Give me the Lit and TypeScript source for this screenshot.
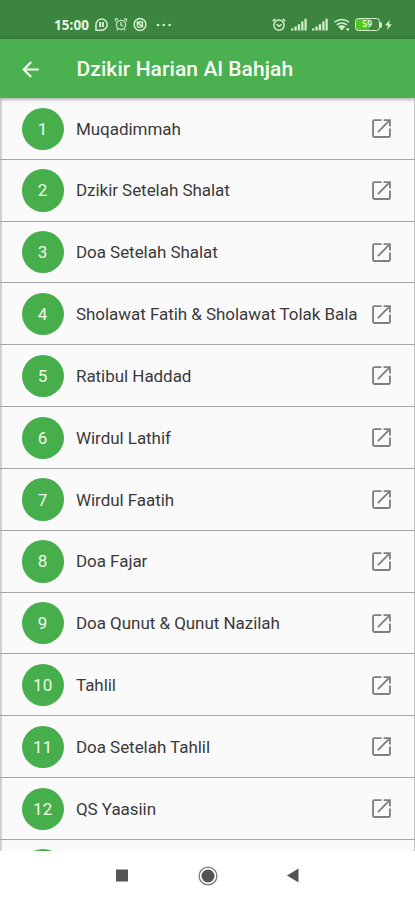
import { LitElement, html, css, svg } from "lit";
import { customElement } from "lit/decorators.js";

const TITLES = [
  "Muqadimmah",
  "Dzikir Setelah Shalat",
  "Doa Setelah Shalat",
  "Sholawat Fatih & Sholawat Tolak Bala",
  "Ratibul Haddad",
  "Wirdul Lathif",
  "Wirdul Faatih",
  "Doa Fajar",
  "Doa Qunut & Qunut Nazilah",
  "Tahlil",
  "Doa Setelah Tahlil",
  "QS Yaasiin",
];

const signal = svg`<path d="M0 12.4V10.4h2.3v2zM3.4 12.4V8.6h2.3v3.8zM6.8 12.4V6.2h2.3v6.2zM10.2 12.4V3.6h2.3v8.8zM13.5 12.4V.8h2.2v11.6z"/>`;

@customElement("status-bar")
class StatusBar extends LitElement {
  static styles = css`
    :host {
      display: flex;
      justify-content: space-between;
      align-items: center;
      box-sizing: border-box;
      height: 39px;
      padding: 10px 23.5px 0 54px;
      background: #3b853e;
      color: #d4efcf;
    }
    .group { display: flex; align-items: center; }
    .time {
      width: 40px;
      font: 700 13.5px/16px "Noto Sans", sans-serif;
      letter-spacing: 0.05px;
      color: #e6f6e3;
    }
    svg { display: block; fill: currentColor; overflow: visible; }
    .line { fill: none; stroke: currentColor; stroke-width: 1.5; }
    .dim { opacity: 0.8; }
    .battery {
      box-sizing: border-box;
      display: flex;
      align-items: center;
      justify-content: center;
      width: 24.5px;
      height: 12.5px;
      border: 1.5px solid #d4efcf;
      border-radius: 3.5px;
      background: linear-gradient(90deg, #4fc71f 0 55%, #43873f 60%);
      font: 700 8.5px/9px Roboto, sans-serif;
      color: #e4f5df;
    }
    .tip { width: 2px; height: 6px; border-radius: 0 2px 2px 0; background: #d4efcf; }
    .g1 { margin-left: 1px; }
    .g5 { margin-left: 5px; }
    .g6 { margin-left: 6px; }
    .g7 { margin-left: 7px; }
    .g9 { margin-left: 9px; }
    .g3 { margin-left: 3px; }
  `;
  render() {
    return html`
      <div class="group">
        <span class="time">15:00</span>
        <svg class="g1" width="13" height="13" viewBox="0 0 13 13">
          <path class="line" d="M1 12.2V6.5a5.6 5.6 0 1 1 5.6 5.7z" />
          <path d="M4.1 4.1h2v4.8h-2zM6.9 4.1h2v4.8h-2z" />
        </svg>
        <svg class="g7 dim line" width="12" height="13" viewBox="0 0 12 13">
          <circle cx="6" cy="6.8" r="4.6" />
          <path d="M.6 3.4V.9H3M9 .9h2.4v2.5M6 4v3l2 1M2.8 10.8l-1 1.4M9.2 10.8l1 1.4" />
        </svg>
        <svg class="g6 line" width="14" height="13" viewBox="0 0 14 13">
          <circle cx="7" cy="6.5" r="5.9" />
          <path d="M4.4 8.4V4h5v4.6M4.6 4.2 9.8 9.6M4.6 9.2h3" />
        </svg>
        <svg class="g9" width="16" height="4" viewBox="0 0 16 4">
          <circle cx="2" cy="2" r="1.3" /><circle cx="7.8" cy="2" r="1.3" /><circle cx="13.6" cy="2" r="1.3" />
        </svg>
      </div>
      <div class="group">
        <svg class="line" width="14" height="13" viewBox="0 0 14 13">
          <circle cx="7" cy="7.2" r="5.1" />
          <path d="M.8 3.3 3.2.9M10.8.9l2.4 2.4M4.5 6.3 7 8.4l2.6-2.1" />
        </svg>
        <svg class="g5" width="16" height="13" viewBox="0 0 16 13">${signal}</svg>
        <svg class="g5" width="16" height="13" viewBox="0 0 16 13">${signal}</svg>
        <svg class="g6" width="16" height="13" viewBox="0 0 16 13">
          <path class="line" d="M.5 4.2a11 11 0 0 1 14.6 0M2.8 6.9a7.4 7.4 0 0 1 10 0" />
          <path d="M4.2 8.6a5.4 5.4 0 0 1 7.2 0L7.8 12.4zM12.5 10.2H15v2.3h-2.5z" />
        </svg>
        <span class="battery g5">59</span><span class="tip"></span>
        <svg class="g3" width="7" height="10" viewBox="0 0 7 10"><path d="M4.6 0 0 5.6h3L2 10l5-5.8H4z" /></svg>
      </div>
    `;
  }
}

@customElement("dzikir-row")
class DzikirRow extends LitElement {
  static properties = { number: { type: Number }, label: {} };
  declare number: number;
  declare label: string;
  static styles = css`
    :host {
      display: flex;
      align-items: center;
      box-sizing: border-box;
      flex: none;
      height: 61.84px;
      padding: 0.4px 21.4px 0 21.6px;
      border-bottom: 1px solid #a6a6a6;
    }
    .badge {
      display: flex;
      align-items: center;
      justify-content: center;
      flex: none;
      width: 42.2px;
      height: 42.2px;
      border-radius: 50%;
      background: #46ae4b;
      color: #effbed;
      font: 400 17px/20px Roboto, sans-serif;
      letter-spacing: 0.1px;
    }
    .label {
      flex: 1;
      margin-left: 12.2px;
      white-space: nowrap;
      font: 400 17px/20px Roboto, sans-serif;
      letter-spacing: -0.045px;
      color: #3a3a3a;
    }
    svg { flex: none; display: block; fill: #808080; }
  `;
  render() {
    return html`
      <span class="badge">${this.number}</span>
      <span class="label">${this.label}</span>
      <svg width="25" height="25" viewBox="0 0 24 24">
        <path d="M19.2 19.2H4.8V4.8H12V3H5a2 2 0 0 0-2 2v14a2 2 0 0 0 2 2h14c1.1 0 2-.9 2-2v-7h-1.8v7.2zM14 3v1.8h3.9l-10 10 1.3 1.3 10-10V10H21V3h-7z" />
      </svg>
    `;
  }
}

@customElement("app-root")
class AppRoot extends LitElement {
  static styles = css`
    :host {
      display: flex;
      flex-direction: column;
      width: 415px;
      height: 900px;
      overflow: hidden;
      background: #fff;
    }
    .appbar {
      display: flex;
      align-items: center;
      flex: none;
      height: 59px;
      box-sizing: border-box;
      padding: 1px 0 0 17.5px;
      background: #4bb050;
      color: #f8fff6;
      box-shadow: 0 1px 4px rgba(0, 0, 0, 0.4);
      z-index: 1;
    }
    .appbar svg { display: block; fill: currentColor; }
    .title {
      margin-left: 34px;
      white-space: nowrap;
      font: 500 21px/26px Roboto, sans-serif;
      letter-spacing: 0.08px;
    }
    .list {
      display: flex;
      flex-direction: column;
      box-sizing: border-box;
      height: 753px;
      overflow: hidden;
      background: #fafafa;
      box-shadow: inset 2px 0 0 #d2d2d2, inset -1px 0 0 #c2c2c2;
    }
    .next {
      flex: none;
      width: 42.2px;
      height: 42.2px;
      margin: 9px 0 0 21.6px;
      border-radius: 50%;
      background: #46ae4b;
    }
    .nav {
      display: flex;
      align-items: center;
      flex: 1;
      padding-left: 115px;
    }
    .nav svg { display: block; fill: #555; }
    .home { margin-left: 69px; }
    .back { margin-left: 68px; }
  `;
  render() {
    return html`
      <status-bar></status-bar>
      <header class="appbar">
        <svg width="25" height="25" viewBox="0 0 24 24">
          <path d="M20 11H7.83l5.59-5.59L12 4l-8 8 8 8 1.41-1.41L7.83 13H20v-2z" />
        </svg>
        <span class="title">Dzikir Harian Al Bahjah</span>
      </header>
      <main class="list">
        ${TITLES.map((t, i) => html`<dzikir-row .number=${i + 1} .label=${t}></dzikir-row>`)}
        <span class="next"></span>
      </main>
      <nav class="nav">
        <svg width="14" height="13" viewBox="0 0 14 13"><path d="M1 .5h12v12H1z" /></svg>
        <svg class="home" width="20" height="20" viewBox="0 0 20 20">
          <circle cx="10" cy="10" r="8.9" fill="none" stroke="#777" stroke-width="1.3" />
          <circle cx="10" cy="10" r="6.5" />
        </svg>
        <svg class="back" width="14" height="15" viewBox="0 0 14 15"><path d="M1 7.5 12.5.5v14z" /></svg>
      </nav>
    `;
  }
}
